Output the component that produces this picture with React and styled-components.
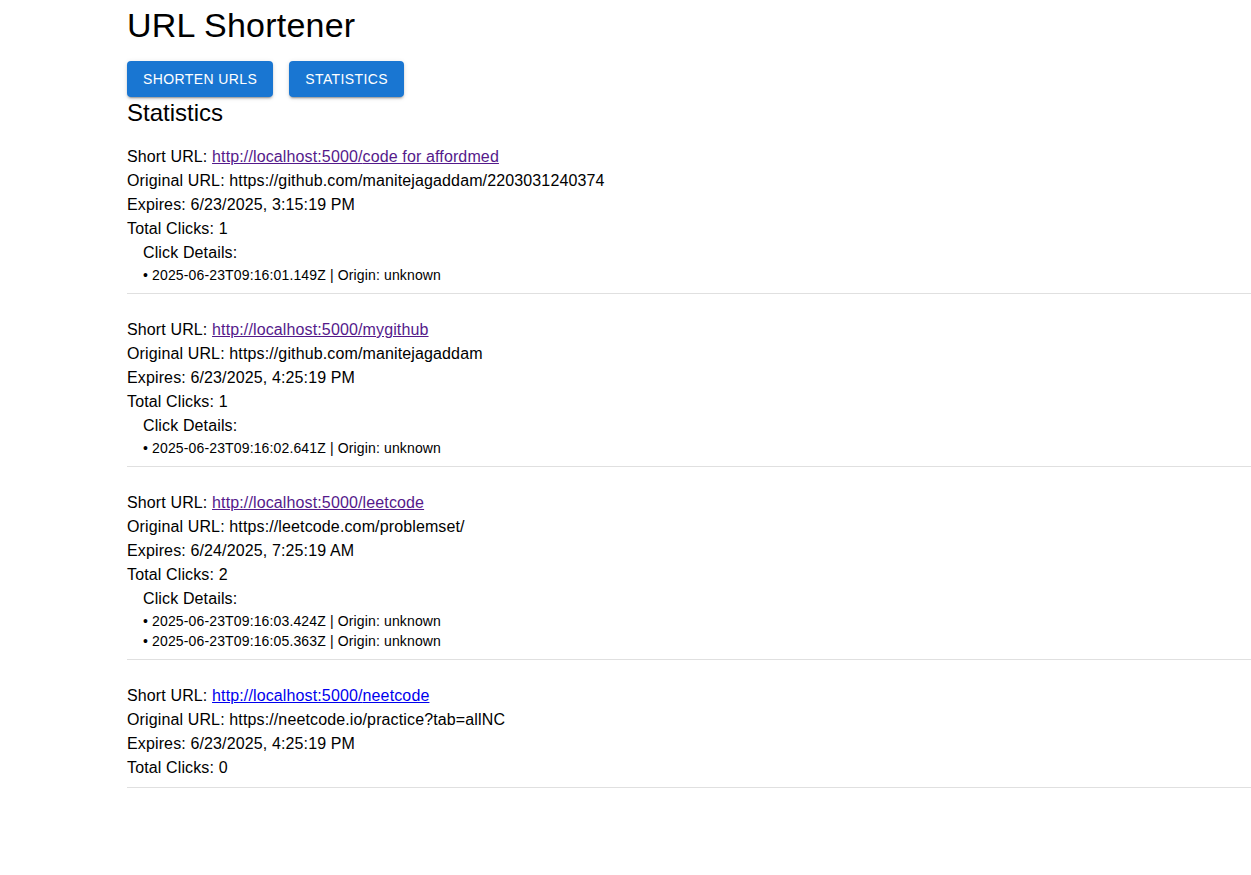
import React from 'react';
import styled, { createGlobalStyle } from 'styled-components';

const GlobalStyle = createGlobalStyle`
  html, body {
    margin: 0;
    padding: 0;
    background: #ffffff;
  }
  body {
    font-family: "Liberation Sans", Arial, sans-serif;
    color: #000000;
  }
`;

const Page = styled.div`
  padding: 4px 0 40px 127px;
`;

const Title = styled.h1`
  margin: 0;
  font-size: 34px;
  line-height: 42px;
  font-weight: 400;
  letter-spacing: 0.22px;
`;

const Toolbar = styled.div`
  display: flex;
  gap: 16px;
  margin-top: 15px;
`;

const NavButton = styled.button`
  height: 36px;
  padding: 0 16px;
  border: none;
  border-radius: 4px;
  background: #1976d2;
  color: #ffffff;
  font-family: "Liberation Sans", Arial, sans-serif;
  font-size: 14px;
  font-weight: 400;
  letter-spacing: 0.4px;
  text-transform: uppercase;
  cursor: pointer;
  box-shadow: 0px 3px 1px -2px rgba(0, 0, 0, 0.2),
    0px 2px 2px 0px rgba(0, 0, 0, 0.14),
    0px 1px 5px 0px rgba(0, 0, 0, 0.12);
`;

const SectionTitle = styled.h2`
  margin: 0;
  font-size: 24px;
  line-height: 32px;
  font-weight: 400;
`;

const EntryList = styled.div`
  display: flex;
  flex-direction: column;
`;

const Entry = styled.div`
  padding: 24px 0 7px;
  border-bottom: 1px solid #e0e0e0;

  &:first-child {
    padding-top: 16px;
  }
`;

const Line = styled.div`
  font-size: 16px;
  line-height: 24px;
  letter-spacing: 0.13px;
`;

const ShortLink = styled.a`
  color: ${(p) => (p.$visited ? '#551a8b' : '#0000ee')};
  text-decoration: underline;
`;

const ClickBlock = styled.div`
  padding-left: 16px;
`;

const ClickList = styled.ul`
  list-style: none;
  margin: 0 0 1px;
  padding: 0;
`;

const ClickItem = styled.li`
  font-size: 14px;
  line-height: 20px;
  letter-spacing: 0.14px;
`;

const entries = [
  {
    slug: 'code for affordmed',
    original: 'https://github.com/manitejagaddam/2203031240374',
    expires: '6/23/2025, 3:15:19 PM',
    visited: true,
    clicks: ['2025-06-23T09:16:01.149Z'],
  },
  {
    slug: 'mygithub',
    original: 'https://github.com/manitejagaddam',
    expires: '6/23/2025, 4:25:19 PM',
    visited: true,
    clicks: ['2025-06-23T09:16:02.641Z'],
  },
  {
    slug: 'leetcode',
    original: 'https://leetcode.com/problemset/',
    expires: '6/24/2025, 7:25:19 AM',
    visited: true,
    clicks: ['2025-06-23T09:16:03.424Z', '2025-06-23T09:16:05.363Z'],
  },
  {
    slug: 'neetcode',
    original: 'https://neetcode.io/practice?tab=allNC',
    expires: '6/23/2025, 4:25:19 PM',
    visited: false,
    clicks: [],
  },
];

export default function App() {
  return (
    <>
      <GlobalStyle />
      <Page>
        <Title>URL Shortener</Title>
        <Toolbar>
          <NavButton>Shorten URLs</NavButton>
          <NavButton>Statistics</NavButton>
        </Toolbar>
        <SectionTitle>Statistics</SectionTitle>
        <EntryList>
          {entries.map((entry) => (
            <Entry key={entry.slug}>
              <Line>
                Short URL:{' '}
                <ShortLink href="#" $visited={entry.visited}>
                  http://localhost:5000/{entry.slug}
                </ShortLink>
              </Line>
              <Line>Original URL: {entry.original}</Line>
              <Line>Expires: {entry.expires}</Line>
              <Line>Total Clicks: {entry.clicks.length}</Line>
              {entry.clicks.length > 0 && (
                <ClickBlock>
                  <Line>Click Details:</Line>
                  <ClickList>
                    {entry.clicks.map((ts) => (
                      <ClickItem key={ts}>• {ts} | Origin: unknown</ClickItem>
                    ))}
                  </ClickList>
                </ClickBlock>
              )}
            </Entry>
          ))}
        </EntryList>
      </Page>
    </>
  );
}
